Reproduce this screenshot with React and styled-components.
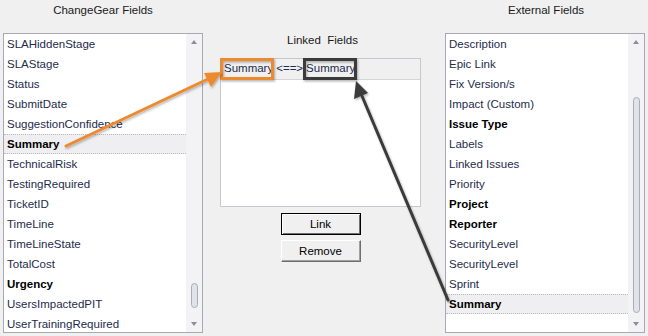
import React from 'react';
import styled, { createGlobalStyle } from 'styled-components';

const GlobalStyle = createGlobalStyle`
  html, body {
    margin: 0;
    padding: 0;
    background: #f0f0f0;
  }
  body {
    font-family: Tahoma, 'Liberation Sans', Arial, sans-serif;
    font-size: 11px;
  }
`;

const Page = styled.div`
  position: relative;
  width: 648px;
  height: 336px;
  overflow: hidden;
  background: #f0f0f0;
  display: flex;
  gap: 18px;
  padding-left: 3px;
  box-sizing: border-box;
`;

const Column = styled.div`
  display: flex;
  flex-direction: column;
  width: ${(p) => p.width}px;
  margin-left: ${(p) => p.offset || 0}px;
`;

const Title = styled.div`
  height: ${(p) => p.h}px;
  line-height: ${(p) => p.lh}px;
  text-align: center;
  color: #1a1a1a;
  font-size: 11.5px;
  padding-left: ${(p) => p.shift || 0}px;
  white-space: pre;
`;

const ListBox = styled.div`
  display: flex;
  height: 300px;
  border: 1px solid #a7aab4;
  background: #fff;
  overflow: hidden;
  box-sizing: border-box;
`;

const Rows = styled.div`
  flex: 1;
  display: flex;
  flex-direction: column;
  min-width: 0;
`;

const Row = styled.div`
  flex: none;
  height: 20px;
  line-height: 18px;
  padding-left: 3px;
  box-sizing: border-box;
  font-size: 11.5px;
  color: ${(p) => (p.bold ? '#000' : '#1e2b4c')};
  font-weight: ${(p) => (p.bold ? 700 : 400)};
  background: ${(p) => (p.selected ? '#efeff1' : 'transparent')};
  border-top: 1px dotted ${(p) => (p.selected ? '#b9b9bd' : 'transparent')};
  border-bottom: 1px dotted ${(p) => (p.selected ? '#b9b9bd' : 'transparent')};
  white-space: nowrap;
`;

const ScrollBar = styled.div`
  width: 16px;
  flex: none;
  background: #f3f3f5;
  display: flex;
  flex-direction: column;
  align-items: center;
  position: relative;
`;

const ScrollArrow = styled.div`
  width: 0;
  height: 0;
  border-left: 3px solid transparent;
  border-right: 3px solid transparent;
  ${(p) =>
    p.down
      ? 'border-top: 4px solid #8d8f98; margin-top: auto; margin-bottom: 6px;'
      : 'border-bottom: 4px solid #8d8f98; margin-top: 6px;'}
`;

const Thumb = styled.div`
  position: absolute;
  left: 5px;
  width: 5px;
  border: 1px solid #a9abb5;
  border-radius: 4px;
  background: #e2e3ea;
`;

const LinkedBox = styled.div`
  height: 149px;
  border: 1px solid #c6c8ce;
  background: #fff;
  box-sizing: border-box;
  display: flex;
  flex-direction: column;
`;

const LinkedHeader = styled.div`
  height: 20px;
  line-height: 19px;
  background: #f0f0f0;
  border-bottom: 1px solid #d5d5d8;
  color: #1e2b4c;
  font-size: 11.5px;
  display: flex;
  gap: 3px;
  white-space: pre;
  padding-left: 3px;
`;

const Buttons = styled.div`
  display: flex;
  flex-direction: column;
  align-items: center;
  gap: 5px;
  margin-top: 6px;
`;

const Button = styled.button`
  width: 80px;
  height: 22px;
  padding: 0;
  font-family: inherit;
  font-size: 11.5px;
  color: #000;
  background: #f0f0f0;
  border: 1px solid;
  border-color: #fff #6e6e6e #6e6e6e #fff;
  box-shadow: inset -1px -1px 0 #a0a0a0;
  ${(p) => p.focused && 'border-color: #000; box-shadow: inset 1px 1px 0 #fff, inset -1px -1px 0 #6e6e6e;'}
`;

const Overlay = styled.svg`
  position: absolute;
  left: 0;
  top: 0;
  pointer-events: none;
`;

const leftItems = [
  ['SLAHiddenStage'],
  ['SLAStage'],
  ['Status'],
  ['SubmitDate'],
  ['SuggestionConfidence'],
  ['Summary', true, true],
  ['TechnicalRisk'],
  ['TestingRequired'],
  ['TicketID'],
  ['TimeLine'],
  ['TimeLineState'],
  ['TotalCost'],
  ['Urgency', true],
  ['UsersImpactedPIT'],
  ['UserTrainingRequired'],
];

const rightItems = [
  ['Description'],
  ['Epic Link'],
  ['Fix Version/s'],
  ['Impact (Custom)'],
  ['Issue Type', true],
  ['Labels'],
  ['Linked Issues'],
  ['Priority'],
  ['Project', true],
  ['Reporter', true],
  ['SecurityLevel'],
  ['SecurityLevel'],
  ['Sprint'],
  ['Summary', true, true],
];

function FieldList({ items, thumbTop, thumbHeight }) {
  return (
    <ListBox>
      <Rows>
        {items.map(([name, bold, selected], i) => (
          <Row key={i} bold={bold} selected={selected}>
            {name}
          </Row>
        ))}
      </Rows>
      <ScrollBar>
        <ScrollArrow />
        <Thumb style={{ top: thumbTop, height: thumbHeight }} />
        <ScrollArrow down />
      </ScrollBar>
    </ListBox>
  );
}

export default function App() {
  return (
    <>
      <GlobalStyle />
      <Page>
        <Column width={200}>
          <Title h={33} lh={20}>ChangeGear Fields</Title>
          <FieldList items={leftItems} thumbTop={249} thumbHeight={23} />
        </Column>
        <Column width={201} offset={-1}>
          <Title h={58} lh={80} shift={4}>{'Linked  Fields'}</Title>
          <LinkedBox>
            <LinkedHeader>
              <span>Summary</span>
              <span>{'<==>'}</span>
              <span>Summary</span>
            </LinkedHeader>
          </LinkedBox>
          <Buttons>
            <Button focused>Link</Button>
            <Button>Remove</Button>
          </Buttons>
        </Column>
        <Column width={200} offset={6}>
          <Title h={33} lh={20} shift={2}>External Fields</Title>
          <FieldList items={rightItems} thumbTop={63} thumbHeight={214} />
        </Column>
        <Overlay width="648" height="336" viewBox="0 0 648 336">
          <defs>
            <filter id="sh" x="-20%" y="-20%" width="140%" height="140%">
              <feDropShadow dx="1" dy="1.5" stdDeviation="1" floodColor="#000" floodOpacity="0.3" />
            </filter>
          </defs>
          <rect x="221.5" y="59.5" width="51" height="19" fill="none" stroke="#ee8a2e" strokeWidth="3" filter="url(#sh)" />
          <rect x="304.5" y="59.5" width="51" height="19" fill="none" stroke="#3b3b3b" strokeWidth="3" filter="url(#sh)" />
          <g filter="url(#sh)">
            <line x1="66" y1="146" x2="208" y2="79" stroke="#ee8a2e" strokeWidth="3" strokeLinecap="round" />
            <polygon points="222,72 204,73 211,87" fill="#ee8a2e" />
          </g>
          <g filter="url(#sh)">
            <line x1="448" y1="300" x2="362" y2="96" stroke="#3b3b3b" strokeWidth="3" strokeLinecap="round" />
            <polygon points="356,81 354,99 368,93" fill="#3b3b3b" />
          </g>
        </Overlay>
      </Page>
    </>
  );
}
